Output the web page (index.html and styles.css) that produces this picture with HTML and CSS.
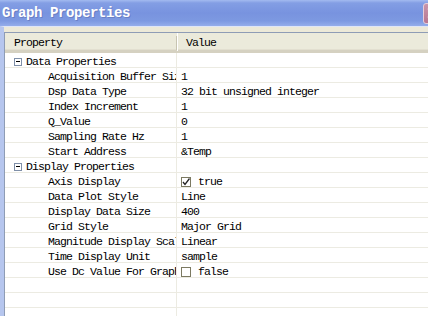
FILE: index.html
```html
<!DOCTYPE html>
<html lang="en">
<head>
    <meta charset="UTF-8">
    <title>Graph Properties</title>
    <link rel="stylesheet" href="styles.css">
</head>
<body>

    <div class="window">
        <!-- Title bar -->
        <div class="titlebar">
            <span class="title">Graph Properties</span>
            <span class="close">
                <svg width="21" height="21" viewBox="0 0 21 21"><path d="M6 6 L14 14 M14 6 L6 14" stroke="#fff" stroke-width="2.2" stroke-linecap="square"/></svg>
            </span>
        </div>

        <div class="client">
            <div class="grid">
                <div class="header">
                    <div class="hcell name">Property</div>
                    <div class="hcell value">Value</div>
                </div>

                <!-- Data Properties -->
                <div class="row category">
                    <div class="cell name"><span class="toggle"></span>Data Properties</div>
                    <div class="cell value"></div>
                </div>
                <div class="row">
                    <div class="cell name">Acquisition Buffer Size</div>
                    <div class="cell value">1</div>
                </div>
                <div class="row">
                    <div class="cell name">Dsp Data Type</div>
                    <div class="cell value">32 bit unsigned integer</div>
                </div>
                <div class="row">
                    <div class="cell name">Index Increment</div>
                    <div class="cell value">1</div>
                </div>
                <div class="row">
                    <div class="cell name">Q_Value</div>
                    <div class="cell value">0</div>
                </div>
                <div class="row">
                    <div class="cell name">Sampling Rate Hz</div>
                    <div class="cell value">1</div>
                </div>
                <div class="row">
                    <div class="cell name">Start Address</div>
                    <div class="cell value">&amp;Temp</div>
                </div>

                <!-- Display Properties -->
                <div class="row category">
                    <div class="cell name"><span class="toggle"></span>Display Properties</div>
                    <div class="cell value"></div>
                </div>
                <div class="row">
                    <div class="cell name">Axis Display</div>
                    <div class="cell value"><span class="check"><svg width="8" height="8" viewBox="0 0 8 8"><path d="M1 4 L3 6.5 L7.5 0.5" fill="none" stroke="#222" stroke-width="1.3"/></svg></span>true</div>
                </div>
                <div class="row">
                    <div class="cell name">Data Plot Style</div>
                    <div class="cell value">Line</div>
                </div>
                <div class="row">
                    <div class="cell name">Display Data Size</div>
                    <div class="cell value">400</div>
                </div>
                <div class="row">
                    <div class="cell name">Grid Style</div>
                    <div class="cell value">Major Grid</div>
                </div>
                <div class="row">
                    <div class="cell name">Magnitude Display Scale</div>
                    <div class="cell value">Linear</div>
                </div>
                <div class="row">
                    <div class="cell name">Time Display Unit</div>
                    <div class="cell value">sample</div>
                </div>
                <div class="row">
                    <div class="cell name">Use Dc Value For Graph</div>
                    <div class="cell value"><span class="check"></span>false</div>
                </div>

                <div class="row empty"><div class="cell name"></div><div class="cell value"></div></div>
                <div class="row empty"><div class="cell name"></div><div class="cell value"></div></div>
                <div class="row empty"><div class="cell name"></div><div class="cell value"></div></div>
            </div>
        </div>
    </div>

</body>
</html>
```

FILE: styles.css
```css
body {
    margin: 0;
    width: 428px;
    height: 316px;
    overflow: hidden;
    background: #fff;
    font-family: 'Liberation Mono', monospace;
}

.window {
    width: 445px;
    display: flex;
    flex-direction: column;
}

.titlebar {
    height: 26px;
    display: flex;
    align-items: center;
    background: linear-gradient(#a3baf0 0px, #839ee4 3px, #7893df 50%, #7d99e1 80%, #94adeb 100%);
}
.title {
    padding-left: 2px;
    color: #fff;
    font-size: 14px;
    font-weight: bold;
    letter-spacing: -0.4px;
    text-shadow: 1px 1px 0 #6a80c4;
}
.close {
    margin-left: auto;
    margin-right: 1px;
    width: 21px;
    height: 21px;
    border-radius: 3px;
    box-sizing: border-box;
    border: 1px solid #e6cdd8;
    background: linear-gradient(#c996ab, #b77691);
    display: flex;
    align-items: center;
    justify-content: center;
}
.close svg {
    display: block;
    margin: -1px;
}

.client {
    background: #ece9d8;
    border-top: 1px solid #dfe6f6;
    border-left: 4px solid #b6c6ee;
    padding-top: 5px;
}

.grid {
    background: #fff;
    border-top: 1px solid #8e9cb5;
    border-left: 1px solid #8e9cb5;
    font-size: 11.5px;
    letter-spacing: -0.9px;
    color: #000;
}

.header {
    display: grid;
    grid-template-columns: 172px 1fr;
    height: 20px;
    box-sizing: border-box;
    background: #ebeadb;
    border-bottom: 3px solid #d5d1c1;
    box-shadow: inset 0 -1px 0 #e2dfd0;
}
.hcell {
    padding-top: 3px;
    line-height: 14px;
}
.hcell.name {
    padding-left: 9px;
    border-right: 1px solid #c7c4b1;
    margin: 3px 0 1px;
    padding-top: 0;
}
.hcell.value {
    padding-left: 9px;
    box-shadow: inset 1px 0 0 #fff;
}

.row {
    display: grid;
    grid-template-columns: 172px 1fr;
    height: 15px;
    box-sizing: border-box;
    border-bottom: 1px solid #ecebe2;
}
.cell {
    height: 14px;
    box-sizing: border-box;
    padding-top: 3px;
    line-height: 12px;
    white-space: nowrap;
    overflow-x: clip;
    overflow-y: visible;
}
.cell.name {
    padding-left: 43px;
    border-right: 1px solid #ecebe2;
}
.cell.value {
    padding-left: 4px;
    display: flex;
    align-items: flex-start;
}
.category .cell.name {
    padding-left: 9px;
    display: flex;
    align-items: flex-start;
}

.toggle {
    width: 8px;
    height: 8px;
    margin-top: 2px;
    margin-right: 4px;
    box-sizing: border-box;
    border: 1px solid #7f8fa8;
    background: #fff;
    position: relative;
    flex: none;
}
.toggle::after {
    content: "";
    position: absolute;
    left: 1px;
    top: 2px;
    width: 4px;
    height: 1px;
    background: #000;
}

.check {
    width: 10px;
    height: 10px;
    margin-top: 1px;
    margin-right: 7px;
    box-sizing: border-box;
    border: 1px solid #7c7a62;
    background: #fff;
    display: flex;
    align-items: center;
    justify-content: center;
    flex: none;
}
.check svg {
    display: block;
}
```
